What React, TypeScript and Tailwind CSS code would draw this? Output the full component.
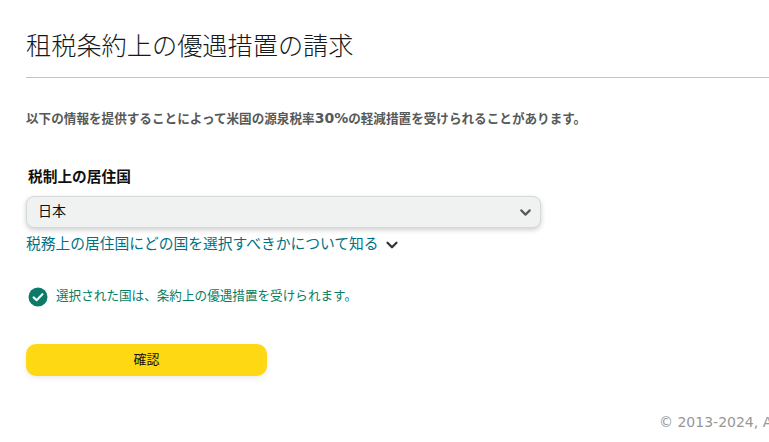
import { ChevronDown } from "lucide-react";

const FONT = "font-['Noto_Sans_CJK_JP','Liberation_Sans',sans-serif]";

const CheckBadge = () => (
  <svg width="20" height="20" viewBox="0 0 20 20" className="shrink-0">
    <circle cx="10" cy="10" r="9.5" fill="#0b7a68" />
    <path
      d="M5.6 10.4 L8.6 13.2 L14.4 7.2"
      fill="none"
      stroke="#f3f7f6"
      strokeWidth="2.2"
      strokeLinecap="round"
      strokeLinejoin="round"
    />
  </svg>
);

export default function App() {
  return (
    <div className={`${FONT} h-[442px] w-[769px] overflow-hidden bg-white pl-[26px] text-[#0f1111]`}>
      <h1 className="flex h-[77px] items-end whitespace-nowrap pb-[14px] text-[25.2px] leading-[38px] font-light text-[#16191a]">
        租税条約上の優遇措置の請求
      </h1>
      <div className="h-px bg-[#c4c4c4]" />

      <p className="mt-[31px] whitespace-nowrap text-[12.6px] leading-[18px] font-bold text-[#565959]">
        以下の情報を提供することによって米国の源泉税率<span className="font-['DejaVu_Sans',sans-serif] text-[14px]">30%</span>の軽減措置を受けられることがあります。
      </p>

      <label className="mt-[39px] block pl-[2px] text-[14.7px] leading-[20px] font-bold text-[#0f1111]">
        税制上の居住国
      </label>

      <div className="mt-[10px] flex h-[32px] w-[515px] items-center justify-between rounded-[8px] border border-[#d5d9d9] bg-[#f0f2f2] pr-[6px] pl-[11px] text-[14px] shadow-[0_2px_5px_rgba(15,17,17,0.2)]">
        <span className="mb-[3px]">日本</span>
        <ChevronDown size={17} strokeWidth={3} className="text-[#565959]" />
      </div>

      <div className="mt-[7px] flex h-[20px] items-center whitespace-nowrap text-[14.75px] leading-[20px] text-[#007185]">
        <span className="mb-[4px]">税務上の居住国にどの国を選択すべきかについて知る</span>
        <ChevronDown size={18} strokeWidth={3} className="ml-[4px] text-[#333]" />
      </div>

      <div className="mt-[32px] flex h-[20px] items-center pl-[2px] whitespace-nowrap text-[12.6px] leading-[18px] text-[#067d62]">
        <CheckBadge />
        <span className="mb-[5px] ml-[8px]">選択された国は、条約上の優遇措置を受けられます。</span>
      </div>

      <button className="mt-[37px] flex h-[32px] w-[241px] items-center justify-center rounded-[10px] bg-[#ffd814] pb-[2px] text-[13px] text-[#0f1111] shadow-[0_2px_5px_rgba(213,217,217,0.5)]">
        確認
      </button>

      <div className="mt-[36px] pl-[633px] whitespace-nowrap font-['DejaVu_Sans',sans-serif] text-[14px] leading-[20px] text-[#979797]">
        © 2013-2024, Amazon.com, Inc.
      </div>
    </div>
  );
}
